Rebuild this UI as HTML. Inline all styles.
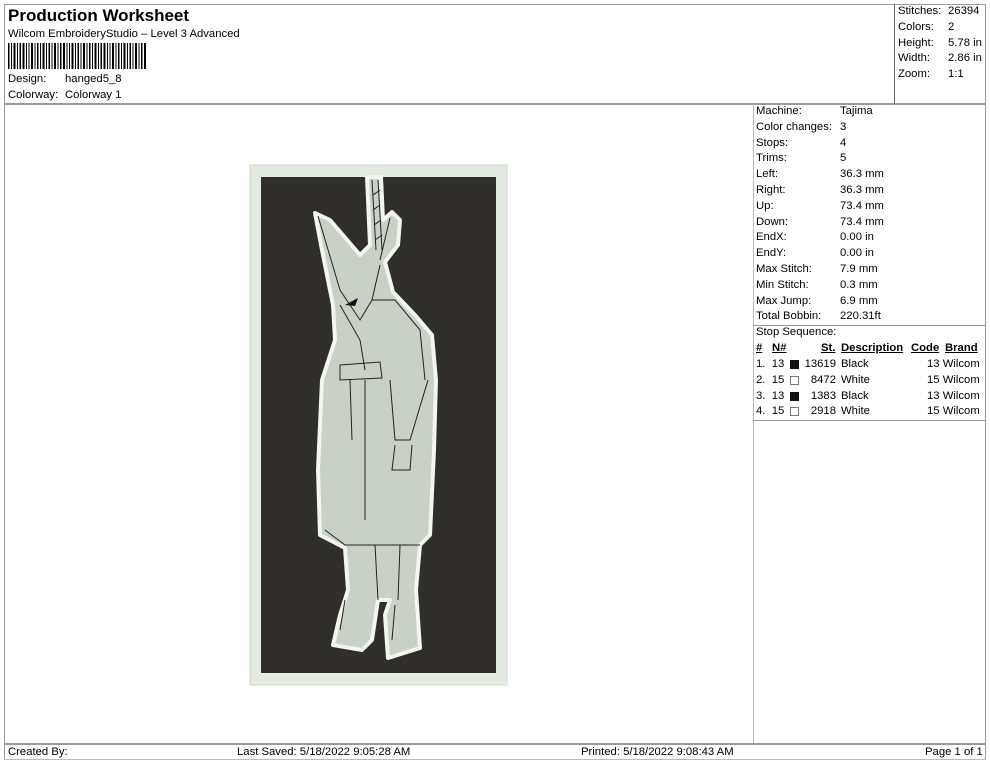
<!DOCTYPE html>
<html><head><meta charset="utf-8"><style>
*{margin:0;padding:0;box-sizing:border-box}
body{width:990px;height:762px;background:#fff;font-family:"Liberation Sans",sans-serif;font-size:11.3px;color:#000;position:relative;overflow:hidden}
.a{position:absolute;white-space:nowrap}
.l{position:absolute;background:#999}
.row{position:absolute;height:15.8px;line-height:15.8px;white-space:nowrap}
</style></head><body>
<div class="l" style="left:4px;top:4px;width:982px;height:1px"></div>
<div class="l" style="left:4px;top:4px;width:1px;height:756px"></div>
<div class="l" style="left:985px;top:4px;width:1px;height:756px"></div>
<div class="l" style="left:4px;top:103px;width:982px;height:2px"></div>
<div class="l" style="left:894px;top:4px;width:1px;height:100px;background:#666"></div>
<div class="l" style="left:753px;top:104px;width:1px;height:640px;background:#bbb"></div>
<div class="l" style="left:753px;top:325px;width:233px;height:1px"></div>
<div class="l" style="left:753px;top:420px;width:233px;height:1px"></div>
<div class="l" style="left:4px;top:743px;width:982px;height:2px"></div>
<div class="l" style="left:4px;top:759px;width:982px;height:1px;background:#bbb"></div>

<div class="a" style="left:8px;top:6px;font-size:17px;font-weight:bold">Production Worksheet</div>
<div class="a" style="left:8px;top:28px">Wilcom EmbroideryStudio – Level 3 Advanced</div>
<svg class="a" style="left:8px;top:43px" width="140" height="26">
<g fill="#000">
<rect x="0" y="0" width="1.5" height="26"/><rect x="3" y="0" width="1" height="26"/><rect x="5.5" y="0" width="2" height="26"/><rect x="9" y="0" width="1" height="26"/><rect x="11.5" y="0" width="1.5" height="26"/><rect x="14.5" y="0" width="2" height="26"/><rect x="18" y="0" width="1" height="26"/><rect x="20.5" y="0" width="1" height="26"/><rect x="23" y="0" width="2" height="26"/><rect x="26.5" y="0" width="1" height="26"/><rect x="29" y="0" width="1.5" height="26"/><rect x="32" y="0" width="1" height="26"/><rect x="34.5" y="0" width="2" height="26"/><rect x="38" y="0" width="1" height="26"/><rect x="40.5" y="0" width="1.5" height="26"/><rect x="43.5" y="0" width="1" height="26"/><rect x="46" y="0" width="2" height="26"/><rect x="49.5" y="0" width="1" height="26"/><rect x="52" y="0" width="1.5" height="26"/><rect x="55" y="0" width="2" height="26"/><rect x="58.5" y="0" width="1" height="26"/><rect x="61" y="0" width="1" height="26"/><rect x="63.5" y="0" width="2" height="26"/><rect x="67" y="0" width="1" height="26"/><rect x="69.5" y="0" width="1.5" height="26"/><rect x="72.5" y="0" width="1" height="26"/><rect x="75" y="0" width="2" height="26"/><rect x="78.5" y="0" width="1" height="26"/><rect x="81" y="0" width="1.5" height="26"/><rect x="84" y="0" width="1" height="26"/><rect x="86.5" y="0" width="2" height="26"/><rect x="90" y="0" width="1" height="26"/><rect x="92.5" y="0" width="1.5" height="26"/><rect x="95.5" y="0" width="2" height="26"/><rect x="99" y="0" width="1" height="26"/><rect x="101.5" y="0" width="1" height="26"/><rect x="104" y="0" width="2" height="26"/><rect x="107.5" y="0" width="1" height="26"/><rect x="110" y="0" width="1.5" height="26"/><rect x="113" y="0" width="1" height="26"/><rect x="115.5" y="0" width="2" height="26"/><rect x="119" y="0" width="1" height="26"/><rect x="121.5" y="0" width="1.5" height="26"/><rect x="124.5" y="0" width="1" height="26"/><rect x="127" y="0" width="2" height="26"/><rect x="130.5" y="0" width="1" height="26"/><rect x="133" y="0" width="1.5" height="26"/><rect x="136" y="0" width="2" height="26"/>
</g></svg>
<div class="a" style="left:8px;top:73px">Design:</div><div class="a" style="left:65px;top:73px">hanged5_8</div>
<div class="a" style="left:8px;top:89px">Colorway:</div><div class="a" style="left:65px;top:89px">Colorway 1</div>

<div class="row" style="left:898px;top:4px">Stitches:</div><div class="row" style="left:948px;top:4px">26394</div>
<div class="row" style="left:898px;top:20px">Colors:</div><div class="row" style="left:948px;top:20px">2</div>
<div class="row" style="left:898px;top:36px">Height:</div><div class="row" style="left:948px;top:36px">5.78 in</div>
<div class="row" style="left:898px;top:51px">Width:</div><div class="row" style="left:948px;top:51px">2.86 in</div>
<div class="row" style="left:898px;top:67px">Zoom:</div><div class="row" style="left:948px;top:67px">1:1</div>

<div style="position:absolute;left:756px;top:104px">
<div class="row" style="top:0">Machine:</div><div class="row" style="left:84px;top:0">Tajima</div>
<div class="row" style="top:15.8px">Color changes:</div><div class="row" style="left:84px;top:15.8px">3</div>
<div class="row" style="top:31.6px">Stops:</div><div class="row" style="left:84px;top:31.6px">4</div>
<div class="row" style="top:47.4px">Trims:</div><div class="row" style="left:84px;top:47.4px">5</div>
<div class="row" style="top:63.2px">Left:</div><div class="row" style="left:84px;top:63.2px">36.3 mm</div>
<div class="row" style="top:79px">Right:</div><div class="row" style="left:84px;top:79px">36.3 mm</div>
<div class="row" style="top:94.8px">Up:</div><div class="row" style="left:84px;top:94.8px">73.4 mm</div>
<div class="row" style="top:110.6px">Down:</div><div class="row" style="left:84px;top:110.6px">73.4 mm</div>
<div class="row" style="top:126.4px">EndX:</div><div class="row" style="left:84px;top:126.4px">0.00 in</div>
<div class="row" style="top:142.2px">EndY:</div><div class="row" style="left:84px;top:142.2px">0.00 in</div>
<div class="row" style="top:158px">Max Stitch:</div><div class="row" style="left:84px;top:158px">7.9 mm</div>
<div class="row" style="top:173.8px">Min Stitch:</div><div class="row" style="left:84px;top:173.8px">0.3 mm</div>
<div class="row" style="top:189.6px">Max Jump:</div><div class="row" style="left:84px;top:189.6px">6.9 mm</div>
<div class="row" style="top:205.4px">Total Bobbin:</div><div class="row" style="left:84px;top:205.4px">220.31ft</div>
<div class="row" style="top:221.2px">Stop Sequence:</div>
<div class="row" style="top:237px;font-weight:bold;text-decoration:underline">#</div>
<div class="row" style="left:16px;top:237px;font-weight:bold;text-decoration:underline">N#</div>
<div class="row" style="left:65px;top:237px;font-weight:bold;text-decoration:underline">St.</div>
<div class="row" style="left:85px;top:237px;font-weight:bold;text-decoration:underline">Description</div>
<div class="row" style="left:155px;top:237px;font-weight:bold;text-decoration:underline">Code</div>
<div class="row" style="left:189px;top:237px;font-weight:bold;text-decoration:underline">Brand</div>
</div>
<div style="position:absolute;left:756px;top:357px">
<div class="row" style="top:0">1.&nbsp; 13</div><div class="a" style="left:34px;top:3px;width:9px;height:9px;background:#111"></div><div class="row" style="left:44px;top:0;width:36px;text-align:right">13619</div><div class="row" style="left:85px;top:0">Black</div><div class="row" style="left:171px;top:0">13 Wilcom</div>
<div class="row" style="top:15.8px">2.&nbsp; 15</div><div class="a" style="left:34px;top:18.5px;width:9px;height:9px;border:1px solid #777"></div><div class="row" style="left:44px;top:15.8px;width:36px;text-align:right">8472</div><div class="row" style="left:85px;top:15.8px">White</div><div class="row" style="left:171px;top:15.8px">15 Wilcom</div>
<div class="row" style="top:31.6px">3.&nbsp; 13</div><div class="a" style="left:34px;top:34.5px;width:9px;height:9px;background:#111"></div><div class="row" style="left:44px;top:31.6px;width:36px;text-align:right">1383</div><div class="row" style="left:85px;top:31.6px">Black</div><div class="row" style="left:171px;top:31.6px">13 Wilcom</div>
<div class="row" style="top:47.4px">4.&nbsp; 15</div><div class="a" style="left:34px;top:50px;width:9px;height:9px;border:1px solid #777"></div><div class="row" style="left:44px;top:47.4px;width:36px;text-align:right">2918</div><div class="row" style="left:85px;top:47.4px">White</div><div class="row" style="left:171px;top:47.4px">15 Wilcom</div>
</div>

<svg class="a" style="left:0;top:0" width="990" height="762">
<rect x="250" y="165" width="257" height="520" fill="#e4ebe1" stroke="#cfd6cc"/>
<rect x="261" y="177" width="235" height="496" fill="#302e2b"/>
<path d="M367,177 L381,177 L383,220 L392,212 L400,220 L398,245 L385,262 L393,292 L415,315 L432,335 L436,380 L434,450 L430,535 L420,545 L416,590 L420,648 L388,658 L385,615 L390,600 L378,600 L372,640 L362,650 L333,645 L340,615 L348,590 L345,548 L320,535 L318,470 L322,380 L335,340 L333,305 L322,250 L315,213 L330,220 L360,255 L370,245 Z" fill="#c9d0c6" stroke="#f2f5f0" stroke-width="4" stroke-linejoin="round"/>
<g fill="none" stroke="#222" stroke-width="1">
<path d="M372,180 L376,250 M378,180 L382,250 M373,195 l7,-5 M373,210 l7,-5 M374,225 l7,-5 M375,240 l7,-5 M390,218 L380,260"/>
<path d="M318,216 L340,290 L360,320 L372,300 L380,265"/>
<path d="M340,305 L360,340 L365,370 M372,300 L395,300 L420,330 L425,380"/>
<path d="M340,365 L380,362 L382,378 L340,380 Z"/>
<path d="M350,380 L352,440 M365,380 L365,520 M390,380 L395,440 L410,440 L428,380"/>
<path d="M395,445 L392,470 L410,470 L412,445"/>
<path d="M325,530 L345,545 L420,545 M375,545 L378,600 M400,545 L398,600"/>
<path d="M345,600 L340,630 M395,605 L392,640"/>
</g>
<path d="M345,305 L358,298 L355,306 Z" fill="#111"/>
</svg>

<div class="a" style="left:8px;top:746px">Created By:</div>
<div class="a" style="left:237px;top:746px">Last Saved: 5/18/2022 9:05:28 AM</div>
<div class="a" style="left:581px;top:746px">Printed: 5/18/2022 9:08:43 AM</div>
<div class="a" style="left:925px;top:746px">Page 1 of 1</div>
</body></html>
